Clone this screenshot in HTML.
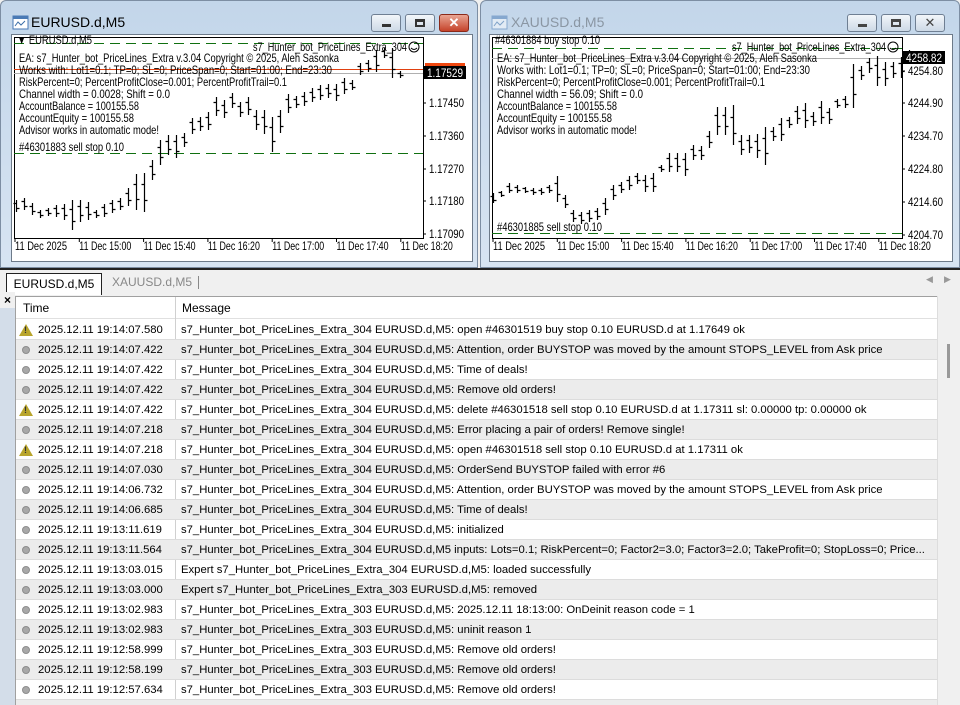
<!DOCTYPE html>
<html><head><meta charset="utf-8">
<style>
*{margin:0;padding:0;box-sizing:border-box}
html,body{width:960px;height:705px;overflow:hidden}
body{background:#f0f0f0;font-family:"Liberation Sans",sans-serif;position:relative}
.win{position:absolute;top:0;height:268px;background:linear-gradient(#c3d6ea,#d7e4f2);border:1px solid #7d8ea3;border-radius:6px 6px 0 0}
.title{position:absolute;left:30px;top:13px;font-size:14px;color:#000}
.btn{position:absolute;top:13px;width:30px;height:18px;border:1px solid #6f7f93;border-radius:3px;background:linear-gradient(#f2f6fa,#cdd9e6)}
.client{position:absolute;background:#fff;border:1px solid #6d7a89}
svg text{font-family:"Liberation Sans",sans-serif}
.tabs{position:absolute;left:0;top:268px;width:960px;height:23px;background:#f0f0f0;border-top:2px solid #222}
.log{position:absolute;left:15px;top:296px;width:922px;height:409px;background:#fff;border-left:1px solid #a0a0a0;border-top:1px solid #a0a0a0;overflow:hidden}
.row{position:absolute;left:0;width:922px;height:20px;font-size:11.3px;line-height:20px;border-bottom:1px solid #dcdcdc;white-space:nowrap;overflow:hidden}
.row.g{background:#ececec}
.row .t{position:absolute;left:22px}
.row .m{position:absolute;left:165px}
.row .ic{position:absolute;left:6px;top:6px;width:8px;height:8px;border-radius:50%;background:#a8a8a8;border:1px solid #8d8d8d}
.row .w{position:absolute;left:3px;top:4px;width:0;height:0;border-left:7px solid transparent;border-right:7px solid transparent;border-bottom:12px solid #b9a52c}
.row .w:after{content:"!";position:absolute;left:-2px;top:2px;font-size:9px;line-height:9px;font-weight:bold;color:#333}
.vl{position:absolute;left:159px;top:0;width:1px;height:409px;background:#d0d0d0}
</style></head><body>

<div class="win" style="left:0;width:478px">
 <svg style="position:absolute;left:11px;top:14px" width="18" height="16"><rect x="1" y="1" width="15" height="13" fill="#fff" stroke="#4a7ab5"/><rect x="1" y="1" width="15" height="3" fill="#4a7ab5"/><path d="M3 11 L6 7 L9 10 L13 6" stroke="#3b6ea8" fill="none"/></svg>
 <div class="title">EURUSD.d,M5</div>
 <div class="btn" style="left:370px"><div style="position:absolute;left:10px;top:9px;width:9px;height:3px;background:#333"></div></div>
 <div class="btn" style="left:404px"><div style="position:absolute;left:9px;top:4px;width:10px;height:8px;border:2px solid #333;border-top-width:3px"></div></div>
 <div class="btn" style="left:438px;background:linear-gradient(#e9a593,#c5432a);border-color:#8b2a1a;color:#fff;font-weight:bold;text-align:center;font-size:13px;line-height:16px">✕</div>
 <div class="client" style="left:10px;top:33px;width:462px;height:228px"></div>
</div>
<div class="win" style="left:480px;width:480px">
 <svg style="position:absolute;left:10px;top:14px" width="18" height="16" opacity=".5"><rect x="1" y="1" width="15" height="13" fill="#fff" stroke="#4a7ab5"/><rect x="1" y="1" width="15" height="3" fill="#4a7ab5"/><path d="M3 11 L6 7 L9 10 L13 6" stroke="#3b6ea8" fill="none"/></svg>
 <div class="title" style="color:#8a96a3">XAUUSD.d,M5</div>
 <div class="btn" style="left:366px"><div style="position:absolute;left:10px;top:9px;width:9px;height:3px;background:#444"></div></div>
 <div class="btn" style="left:400px"><div style="position:absolute;left:9px;top:4px;width:10px;height:8px;border:2px solid #444;border-top-width:3px"></div></div>
 <div class="btn" style="left:434px;text-align:center;font-size:13px;line-height:16px;color:#444">✕</div>
 <div class="client" style="left:8px;top:33px;width:464px;height:228px"></div>
</div>

<svg id="c1" style="position:absolute;left:0;top:0" width="480" height="268"></svg>
<svg id="c2" style="position:absolute;left:480px;top:0" width="480" height="268"></svg>

<div class="tabs">
 <div style="position:absolute;left:6px;top:3px;width:96px;height:22px;background:#fff;border:1px solid #222;border-bottom:none;font-size:12px;line-height:20px;text-align:center">EURUSD.d,M5</div>
 <div style="position:absolute;left:112px;top:5px;font-size:12px;color:#888">XAUUSD.d,M5</div>
 <div style="position:absolute;left:198px;top:6px;width:1px;height:13px;background:#888"></div>
 <div style="position:absolute;left:926px;top:4px;font-size:9px;color:#999">◀</div>
 <div style="position:absolute;left:944px;top:4px;font-size:9px;color:#999">▶</div>
</div>
<div style="position:absolute;left:0;top:292px;width:15px;height:413px;background:#d3dde9"></div>
<div style="position:absolute;left:0;top:292px;width:15px;height:16px;background:#f0f0f0;font-size:12px;font-weight:bold;text-align:center;line-height:16px">×</div>
<div class="log" id="log">
 <div style="position:absolute;left:0;top:0;width:922px;height:22px;background:#fff;border-bottom:1px solid #e0e0e0;font-size:12px;line-height:22px"><span style="position:absolute;left:7px">Time</span><span style="position:absolute;left:166px">Message</span></div>
 <div class="vl"></div>
</div>
<div style="position:absolute;left:937px;top:296px;width:23px;height:409px;background:#f0f0f0;border-left:1px solid #ddd"><div style="position:absolute;left:9px;top:48px;width:3px;height:34px;background:#999"></div></div>

<script>
var NS="http://www.w3.org/2000/svg";
function el(s,t,a,txt){var e=document.createElementNS(NS,t);for(var k in a)e.setAttribute(k,a[k]);if(txt)e.textContent=txt;s.appendChild(e);return e}
function tx(s,x,y,t,w,extra){var a={x:x,y:y,"font-size":"12"};if(w){a.textLength=w;a.lengthAdjust="spacingAndGlyphs"}for(var k in extra)a[k]=extra[k];return el(s,"text",a,t)}
function chart(id,px,pr,pb,bars,x0,prices,times,cur,curY,info,sell,sellY,buyY,buyTxt,redY){
 var s=document.getElementById(id);
 el(s,"rect",{x:px+.5,y:37.5,width:pr-px,height:pb-37,fill:"#fff",stroke:"#000"});
 el(s,"line",{x1:px,x2:pr,y1:buyY+.5,y2:buyY+.5,stroke:"#107010","stroke-dasharray":"10,6","stroke-width":1});
 el(s,"line",{x1:px,x2:pr,y1:sellY+.5,y2:sellY+.5,stroke:"#107010","stroke-dasharray":"10,6","stroke-width":1});
 if(redY)el(s,"line",{x1:px,x2:pr,y1:redY+.5,y2:redY+.5,stroke:"#e04010"});
 el(s,"line",{x1:px,x2:pr,y1:curY+.5,y2:curY+.5,stroke:"#b0b0b0"});
 var d="";
 bars.forEach(function(b,i){var x=x0+i*8+.5;d+="M"+x+" "+b[0]+"V"+b[1]+"M"+(x-3)+" "+(b[0]+(b[1]-b[0])*.3|0)+".5H"+x+"M"+x+" "+(b[0]+(b[1]-b[0])*.7|0)+".5H"+(x+3)});
 el(s,"path",{d:d,stroke:"#000","stroke-width":1.2,fill:"none"});
 prices.forEach(function(p){el(s,"line",{x1:pr,x2:pr+3,y1:p[1],y2:p[1],stroke:"#000"});tx(s,pr+6,p[1]+4,p[0],p[0].length*5)});
 if(redY){el(s,"rect",{x:pr+2,y:redY-6,width:40,height:7,fill:"#f04810"})}
 el(s,"rect",{x:pr+1,y:curY-7,width:42,height:13,fill:"#000"});
 tx(s,pr+4,curY+4,cur,36,{fill:"#fff"});
 times.forEach(function(t,i){var x=px+1+i*64.3;el(s,"line",{x1:x,x2:x,y1:pb,y2:pb+4,stroke:"#000"});tx(s,x,pb+12,t,52)});
 var y=62;info.forEach(function(t){tx(s,px+5,y,t[0],t[1]);y+=12});
 tx(s,px+5,sellY-2,sell,105);
 tx(s,px+3,44,buyTxt[0],buyTxt[1]);
 tx(s,pr-170,51,"s7_Hunter_bot_PriceLines_Extra_304",154);
 el(s,"circle",{cx:pr-9,cy:47,r:5,fill:"none",stroke:"#000"});
 el(s,"path",{d:"M"+(pr-12)+" 48q3 3 6 0",stroke:"#000",fill:"none"});
}
var T=["11 Dec 2025","11 Dec 15:00","11 Dec 15:40","11 Dec 16:20","11 Dec 17:00","11 Dec 17:40","11 Dec 18:20"];
var b1=[[200,212],[198,210],[203,215],[210,218],[208,216],[205,217],[204,220],[200,230],[200,222],[202,220],[210,218],[204,217],[200,213],[198,210],[188,206],[174,210],[173,212],[160,180],[140,165],[135,155],[135,158],[133,147],[118,134],[117,131],[112,130],[97,116],[100,118],[93,108],[102,117],[97,115],[110,130],[110,134],[117,152],[110,133],[94,113],[96,108],[92,106],[88,102],[85,100],[84,98],[84,101],[78,94],[80,90],[63,75],[60,72],[50,72],[48,58],[48,78],[71,78]];
chart("c1",14,423,238,b1,16,[["1.17450",103],["1.17360",136],["1.17270",169],["1.17180",201],["1.17090",234]],T,"1.17529",73,[["EA: s7_Hunter_bot_PriceLines_Extra v.3.04 Copyright © 2025, Aleh Sasonka",320],["Works with: Lot1=0.1; TP=0; SL=0; PriceSpan=0; Start=01:00; End=23:30",313],["RiskPercent=0; PercentProfitClose=0.001; PercentProfitTrail=0.1",268],["Channel width = 0.0028; Shift = 0.0",151],["AccountBalance = 100155.58",120],["AccountEquity = 100155.58",115],["Advisor works in automatic mode!",140]],"#46301883 sell stop 0.10",153,43,["▼ EURUSD.d,M5",75],69);
var b2=[[193,203],[191,197],[183,193],[185,193],[187,193],[188,195],[188,195],[185,193],[176,202],[195,208],[210,222],[212,224],[210,222],[208,220],[198,215],[185,200],[182,193],[176,190],[173,184],[175,192],[173,192],[165,172],[153,172],[153,172],[153,176],[145,160],[146,160],[131,148],[107,135],[107,135],[105,145],[135,155],[135,153],[134,158],[127,165],[127,141],[118,141],[117,128],[106,124],[103,128],[112,126],[101,124],[108,124],[99,108],[96,108],[64,108],[66,80],[58,73],[56,86],[62,86],[62,78],[57,78],[50,60]];
chart("c2",12,422,238,b2,13,[["4254.80",71],["4244.90",103],["4234.70",136],["4224.80",169],["4214.60",202],["4204.70",235]],T,"4258.82",58,[["EA: s7_Hunter_bot_PriceLines_Extra v.3.04 Copyright © 2025, Aleh Sasonka",320],["Works with: Lot1=0.1; TP=0; SL=0; PriceSpan=0; Start=01:00; End=23:30",313],["RiskPercent=0; PercentProfitClose=0.001; PercentProfitTrail=0.1",268],["Channel width = 56.09; Shift = 0.0",146],["AccountBalance = 100155.58",120],["AccountEquity = 100155.58",115],["Advisor works in automatic mode!",140]],"#46301885 sell stop 0.10",233,48,["#46301884 buy stop 0.10",105],0);
var rows=[
["w","2025.12.11 19:14:07.580","s7_Hunter_bot_PriceLines_Extra_304 EURUSD.d,M5: open #46301519 buy stop 0.10 EURUSD.d at 1.17649 ok"],
["c","2025.12.11 19:14:07.422","s7_Hunter_bot_PriceLines_Extra_304 EURUSD.d,M5: Attention, order BUYSTOP was moved by the amount STOPS_LEVEL from Ask price"],
["c","2025.12.11 19:14:07.422","s7_Hunter_bot_PriceLines_Extra_304 EURUSD.d,M5: Time of deals!"],
["c","2025.12.11 19:14:07.422","s7_Hunter_bot_PriceLines_Extra_304 EURUSD.d,M5: Remove old orders!"],
["w","2025.12.11 19:14:07.422","s7_Hunter_bot_PriceLines_Extra_304 EURUSD.d,M5: delete #46301518 sell stop 0.10 EURUSD.d at 1.17311 sl: 0.00000 tp: 0.00000 ok"],
["c","2025.12.11 19:14:07.218","s7_Hunter_bot_PriceLines_Extra_304 EURUSD.d,M5: Error placing a pair of orders! Remove single!"],
["w","2025.12.11 19:14:07.218","s7_Hunter_bot_PriceLines_Extra_304 EURUSD.d,M5: open #46301518 sell stop 0.10 EURUSD.d at 1.17311 ok"],
["c","2025.12.11 19:14:07.030","s7_Hunter_bot_PriceLines_Extra_304 EURUSD.d,M5: OrderSend BUYSTOP failed with error #6"],
["c","2025.12.11 19:14:06.732","s7_Hunter_bot_PriceLines_Extra_304 EURUSD.d,M5: Attention, order BUYSTOP was moved by the amount STOPS_LEVEL from Ask price"],
["c","2025.12.11 19:14:06.685","s7_Hunter_bot_PriceLines_Extra_304 EURUSD.d,M5: Time of deals!"],
["c","2025.12.11 19:13:11.619","s7_Hunter_bot_PriceLines_Extra_304 EURUSD.d,M5: initialized"],
["c","2025.12.11 19:13:11.564","s7_Hunter_bot_PriceLines_Extra_304 EURUSD.d,M5 inputs: Lots=0.1; RiskPercent=0; Factor2=3.0; Factor3=2.0; TakeProfit=0; StopLoss=0; Price..."],
["c","2025.12.11 19:13:03.015","Expert s7_Hunter_bot_PriceLines_Extra_304 EURUSD.d,M5: loaded successfully"],
["c","2025.12.11 19:13:03.000","Expert s7_Hunter_bot_PriceLines_Extra_303 EURUSD.d,M5: removed"],
["c","2025.12.11 19:13:02.983","s7_Hunter_bot_PriceLines_Extra_303 EURUSD.d,M5: 2025.12.11 18:13:00: OnDeinit reason code = 1"],
["c","2025.12.11 19:13:02.983","s7_Hunter_bot_PriceLines_Extra_303 EURUSD.d,M5: uninit reason 1"],
["c","2025.12.11 19:12:58.999","s7_Hunter_bot_PriceLines_Extra_303 EURUSD.d,M5: Remove old orders!"],
["c","2025.12.11 19:12:58.199","s7_Hunter_bot_PriceLines_Extra_303 EURUSD.d,M5: Remove old orders!"],
["c","2025.12.11 19:12:57.634","s7_Hunter_bot_PriceLines_Extra_303 EURUSD.d,M5: Remove old orders!"],
["c","",""]];
var L=document.getElementById("log"),h="";
rows.forEach(function(r,i){h+='<div class="row'+(i%2?' g':'')+'" style="top:'+(23+i*20)+'px">'+(r[1]?'<span class="'+(r[0]=='w'?'w':'ic')+'"></span>':'')+'<span class="t">'+r[1]+'</span><span class="m">'+r[2]+'</span></div>'});
L.insertAdjacentHTML("beforeend",h);
</script>
</body></html>
